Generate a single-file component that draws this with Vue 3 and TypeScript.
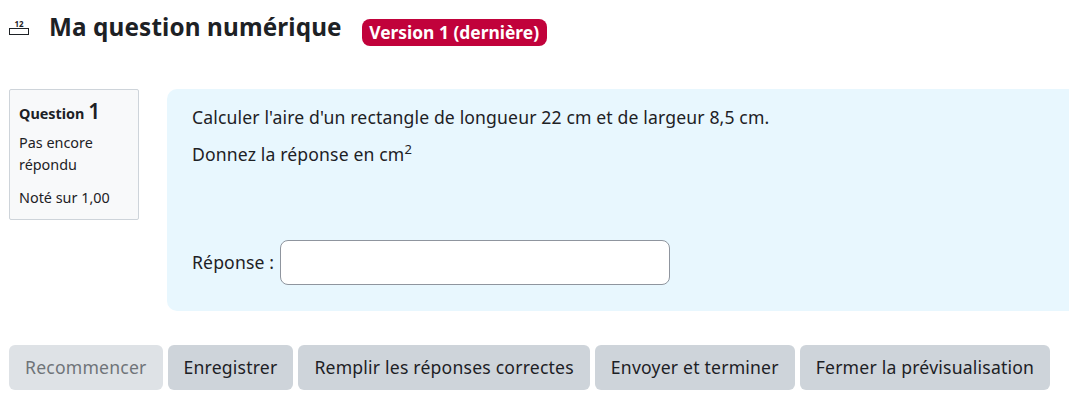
<template>
  <main class="page">
    <header class="heading">
      <svg class="qtype-icon" width="24" height="24" viewBox="0 0 24 24" aria-hidden="true">
        <rect x="0.5" y="11.5" width="19" height="6" fill="#fff" stroke="#1d2125" />
        <text x="10" y="10" text-anchor="middle" class="qtype-digits">12</text>
      </svg>
      <h2>{{ title }}</h2>
      <span class="badge">{{ version }}</span>
    </header>

    <div class="question">
      <aside class="info">
        <h3>Question <span class="qno">1</span></h3>
        <p class="state">Pas encore répondu</p>
        <p class="grade">Noté sur 1,00</p>
      </aside>

      <section class="content">
        <p>Calculer l'aire d'un rectangle de longueur 22 cm et de largeur 8,5 cm.</p>
        <p>Donnez la réponse en cm<sup>2</sup></p>
        <label class="answer">
          <span class="answer-label">Réponse :</span>
          <input v-model="answer" type="text" />
        </label>
      </section>
    </div>

    <div class="actions">
      <button
        v-for="action in actions"
        :key="action.label"
        type="button"
        :disabled="action.disabled"
      >
        {{ action.label }}
      </button>
    </div>
  </main>
</template>

<script setup lang="ts">
import { ref } from "vue";

interface Action {
  label: string;
  disabled?: boolean;
}

const title = "Ma question numérique";
const version = "Version 1 (dernière)";
const answer = ref("");

const actions: Action[] = [
  { label: "Recommencer", disabled: true },
  { label: "Enregistrer" },
  { label: "Remplir les réponses correctes" },
  { label: "Envoyer et terminer" },
  { label: "Fermer la prévisualisation" },
];
</script>

<style>
html,
body {
  margin: 0;
  overflow: hidden;
  background: #fff;
}
</style>

<style scoped>
.page {
  box-sizing: border-box;
  height: 406px;
  padding: 11px 0 0 9px;
  font-family: "Noto Sans", "Open Sans", sans-serif;
  font-size: 17.6px;
  letter-spacing: 0.14px;
  color: #1d2125;
}

.heading {
  display: flex;
  align-items: center;
  height: 36px;
}

.qtype-icon {
  flex: none;
  margin-right: 16px;
}

.qtype-digits {
  font-size: 8px;
  font-weight: 700;
  letter-spacing: 0;
  fill: #1d2125;
}

h2 {
  margin: -4px 20px 0 0;
  font-size: 24.25px;
  font-weight: 700;
  line-height: 1.2;
}

.badge {
  margin-top: 7px;
  padding: 2px 7.5px;
  border-radius: 8px;
  background: #c1023b;
  color: #fff;
  font-size: 17.4px;
  font-weight: 700;
  letter-spacing: 0;
  line-height: 23px;
}

.question {
  display: flex;
  align-items: flex-start;
  gap: 28px;
  margin-top: 42px;
}

.info {
  box-sizing: border-box;
  flex: none;
  width: 130px;
  height: 131px;
  padding: 9px;
  border: 1px solid #ced4da;
  border-radius: 2px;
  background: #f8f9fa;
  font-size: 14.4px;
  letter-spacing: 0;
  line-height: 22px;
}

h3 {
  margin: 0 0 6px;
  font-size: 14.4px;
  font-weight: 700;
  line-height: 24px;
}

.qno {
  font-size: 21px;
  font-weight: 600;
}

.info p {
  margin: 0;
}

.info .state {
  margin-bottom: 11px;
}

.content {
  box-sizing: border-box;
  flex: 1;
  height: 222px;
  margin-right: -20px;
  padding: 16px 25px;
  border-radius: 10px;
  background: #e8f7fe;
}

.content p {
  margin: 0 0 13px;
  line-height: 24px;
}

sup {
  font-size: 13px;
  line-height: 0;
}

.answer {
  display: flex;
  align-items: center;
  gap: 6px;
  margin-top: 74px;
}

.answer-label {
  margin-bottom: 2px;
}

input {
  box-sizing: border-box;
  width: 390px;
  height: 45px;
  padding: 6px 12px;
  border: 1px solid #8f959e;
  border-radius: 8px;
  background: #fff;
  font: inherit;
}

.actions {
  display: flex;
  gap: 5px;
  margin-top: 34px;
}

button {
  height: 45px;
  padding: 0 16px 2px;
  border: 0;
  border-radius: 6px;
  background: #ced4da;
  color: #1d2125;
  font: inherit;
  letter-spacing: 0.2px;
}

button:disabled {
  background: #dee2e6;
  color: #6f7479;
}
</style>
